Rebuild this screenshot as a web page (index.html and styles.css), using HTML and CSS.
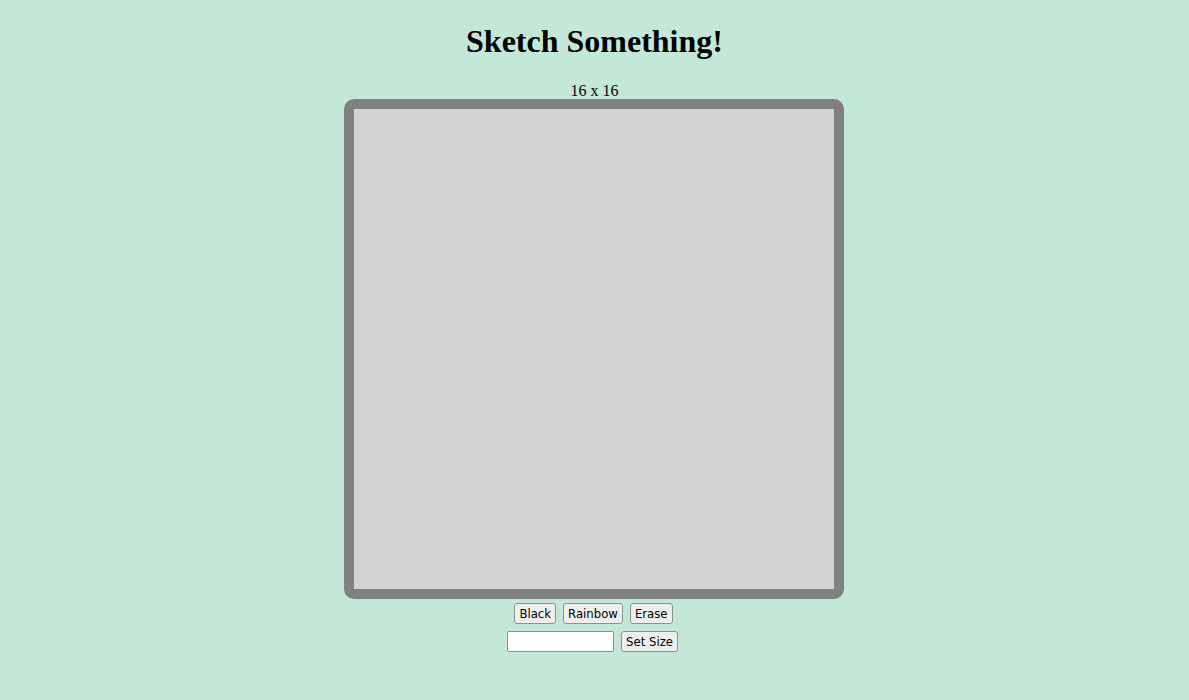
FILE: index.html
```html
<!DOCTYPE html>
<html>
<head>
<meta charset="utf-8">
<link rel="stylesheet" href="styles.css">
</head>
<body>
<div class="page">
  <h1 class="title">Sketch Something!</h1>
  <div class="size-label">16 x 16</div>
  <div class="board"><div class="grid"></div></div>
  <div class="controls">
    <button class="btn">Black</button>
    <button class="btn">Rainbow</button>
    <button class="btn">Erase</button>
  </div>
  <div class="controls controls-size">
    <input class="size-input" type="text">
    <button class="btn">Set Size</button>
  </div>
</div>
</body>
</html>
```
FILE: styles.css
```css
html, body {
  margin: 0;
  padding: 0;
}
body {
  background: #c4e8d7;
  font-family: "Liberation Serif", "Times New Roman", serif;
  color: #000;
}
.page {
  display: flex;
  flex-direction: column;
  align-items: center;
  padding-top: 21px;
}
.title {
  font-size: 32px;
  font-weight: bold;
  margin: 0;
  line-height: 40px;
}
.size-label {
  margin-top: 20px;
  font-size: 16px;
  line-height: 18px;
  transform: translateY(1px);
}
.board {
  margin-top: 0;
  width: 480px;
  height: 480px;
  border: 10px solid #808080;
  border-radius: 10px;
  background: #d3d3d3;
  transform: translateX(-1px);
}
.grid {
  width: 100%;
  height: 100%;
}
.controls {
  display: flex;
  gap: 7px;
  margin-top: 4px;
  align-items: center;
  transform: translateX(-1px);
}
.controls-size {
  margin-top: 7px;
  transform: translateX(-2px);
}
.btn {
  font-family: "DejaVu Sans Condensed", "DejaVu Sans", "Liberation Sans", sans-serif;
  font-stretch: condensed;
  font-size: 13px;
  height: 21px;
  padding: 0 4px;
  background: #efefef;
  border: 1px solid #8f8f8f;
  border-radius: 3px;
  color: #000;
}
.size-input {
  width: 103px;
  height: 17px;
  padding: 1px 1px;
  border: 1px solid #8f8f8f;
  border-radius: 2px;
  background: #fff;
  margin: 0;
}
```
